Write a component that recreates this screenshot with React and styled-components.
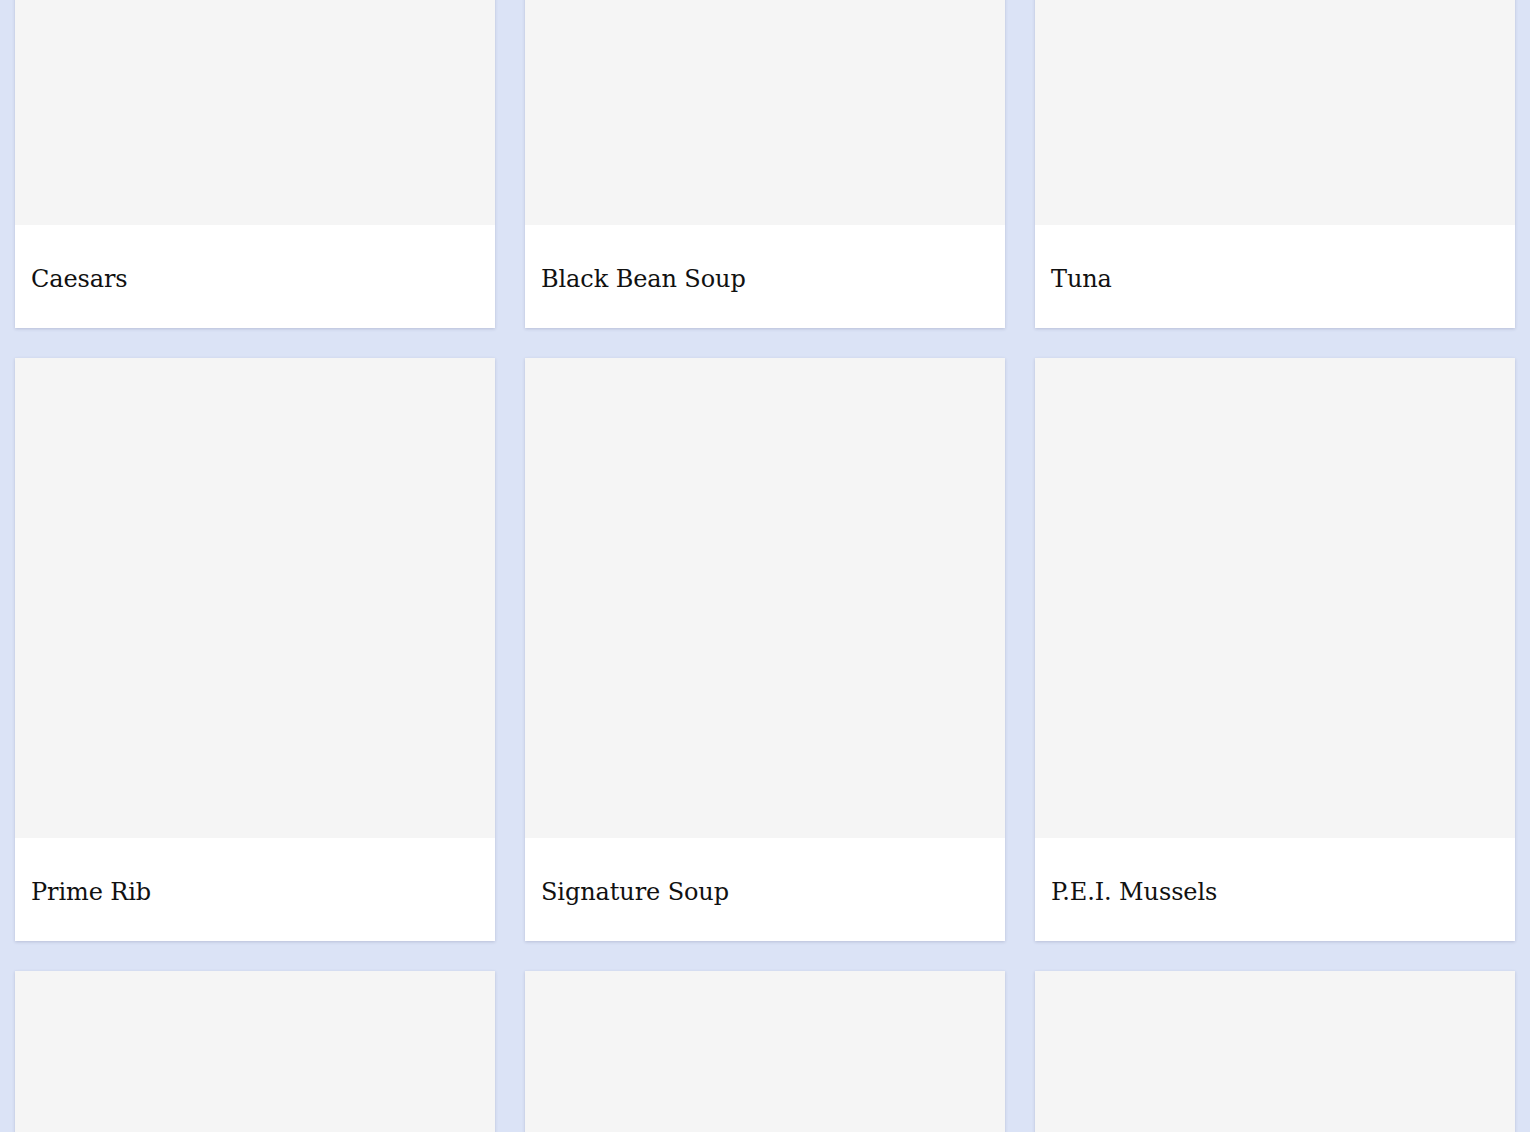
import React from "react";
import styled, { createGlobalStyle } from "styled-components";

const GlobalStyle = createGlobalStyle`
  html, body {
    margin: 0;
    padding: 0;
    background: #dbe3f6;
    overflow: hidden;
  }
`;

const Page = styled.div`
  height: 1132px;
  overflow: hidden;
  background: #dbe3f6;
`;

const MenuGrid = styled.div`
  display: grid;
  grid-template-columns: repeat(3, 480px);
  gap: 30px;
  padding: 0 15px;
  margin-top: -255px;
`;

const Card = styled.div`
  background: #ffffff;
  box-shadow: 0 1px 3px rgba(60, 70, 110, 0.22);
  display: flex;
  flex-direction: column;
`;

const Photo = styled.div`
  height: 480px;
  background: #f5f5f5;
`;

const Caption = styled.div`
  height: 103px;
  box-sizing: border-box;
  padding: 4px 16px 0;
  display: flex;
  align-items: center;
`;

const DishName = styled.h3`
  margin: 0;
  font-family: "DejaVu Serif", "Liberation Serif", serif;
  font-weight: normal;
  font-size: 24px;
  color: #111;
  letter-spacing: -0.1px;
`;

// last row only shows its photos in the view, the names sit below the fold
const dishes = [
  "Caesars",
  "Black Bean Soup",
  "Tuna",
  "Prime Rib",
  "Signature Soup",
  "P.E.I. Mussels",
  null,
  null,
  null,
];

const App = () => {
  return (
    <Page>
      <GlobalStyle />
      <MenuGrid>
        {dishes.map((name, i) => (
          <Card key={i}>
            <Photo />
            {name && (
              <Caption>
                <DishName>{name}</DishName>
              </Caption>
            )}
          </Card>
        ))}
      </MenuGrid>
    </Page>
  );
};

export default App;
